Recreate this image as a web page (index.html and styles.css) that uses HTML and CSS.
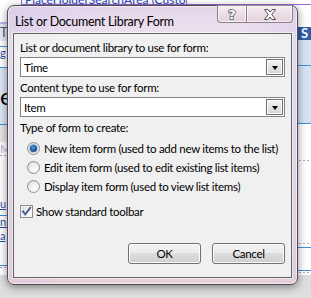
FILE: index.html
```html
<!DOCTYPE html>
<html>
<head>
<meta charset="utf-8">
<link rel="stylesheet" href="styles.css">
</head>
<body>
<div class="page">
  <div class="bg-top">
    <span class="ph">PlaceHolderSearchArea (Custom)</span>
    <span class="ph-line"></span>
  </div>
  <div class="bg-cols">
    <div class="lcol">
      <div class="gap h17"></div>
      <div class="lav-line"></div>
      <div class="band tr">Tr</div>
      <div class="gap h5"></div>
      <div class="bline"></div>
      <div class="band link h20">g</div>
      <div class="bline"></div>
      <div class="band big">e</div>
      <div class="bline"></div>
      <div class="band grey h17"></div>
      <div class="band faded">M</div>
      <div class="dots"></div>
      <div class="gap h42"></div>
      <div class="band link h13">u</div>
      <div class="gap h4"></div>
      <div class="bline"></div>
      <div class="band link h14">ns</div>
      <div class="band link h13">a</div>
      <div class="gap h22"></div>
      <div class="bline"></div>
      <div class="gap h1"></div>
      <div class="dots"></div>
    </div>
    <div class="rcol">
      <div class="gap h22"></div>
      <div class="band dark">S</div>
      <div class="band lblue h25"></div>
      <div class="bline"></div>
      <div class="band lblue h57"></div>
      <div class="bline"></div>
      <div class="gap h36"></div>
      <div class="dots"></div>
      <div class="gap h82"></div>
      <div class="gdots"></div>
      <div class="gap h3"></div>
      <div class="bline"></div>
      <div class="gap h22"></div>
      <div class="bline"></div>
      <div class="gap h1"></div>
      <div class="dots"></div>
    </div>
  </div>
  <div class="bg-bottom"></div>
</div>

<div class="dialog">
  <div class="titlebar">
    <span class="title">List or Document Library Form</span>
    <div class="caption-btns">
      <div class="cbtn help">
        <svg width="12" height="14" viewBox="0 0 12 14"><text x="6" y="12" text-anchor="middle" font-family="DejaVu Sans, sans-serif" font-weight="bold" font-size="13" fill="#ffffff" stroke="#5a5a5a" stroke-width="1.6" paint-order="stroke">?</text></svg>
      </div>
      <div class="cbtn close">
        <svg width="14" height="11" viewBox="0 0 14 11"><path d="M1.5 0.5 H5 L7 3 L9 0.5 H12.5 L8.8 5.5 L12.5 10.5 H9 L7 8 L5 10.5 H1.5 L5.2 5.5 Z" fill="#ffffff" stroke="#555555" stroke-width="1" stroke-linejoin="round"/></svg>
      </div>
    </div>
  </div>
  <div class="client">
    <div class="label">List or document library to use for form:</div>
    <div class="select"><span class="sel-text">Time</span><div class="ddbtn"><i class="tri"></i></div></div>
    <div class="label gap-top">Content type to use for form:</div>
    <div class="select"><span class="sel-text">Item</span><div class="ddbtn"><i class="tri"></i></div></div>
    <div class="label gap-top">Type of form to create:</div>
    <div class="radios">
      <div class="radio-row"><span class="radio checked"></span>New item form (used to add new items to the list)</div>
      <div class="radio-row"><span class="radio"></span>Edit item form (used to edit existing list items)</div>
      <div class="radio-row"><span class="radio"></span>Display item form (used to view list items)</div>
    </div>
    <div class="check-row">
      <span class="checkbox"><svg width="11" height="11" viewBox="0 0 11 11"><path d="M2 5.5 L4.3 8.3 L9.2 1.8" fill="none" stroke="#4b5f96" stroke-width="2" stroke-linecap="square"/></svg></span>
      Show standard toolbar
    </div>
    <div class="buttons">
      <div class="btn">OK</div>
      <div class="btn">Cancel</div>
    </div>
  </div>
</div>
</body>
</html>
```

FILE: styles.css
```css
html, body {
  margin: 0;
  padding: 0;
}
body {
  width: 311px;
  height: 298px;
  overflow: hidden;
  position: relative;
  background: #ffffff;
  font-family: Lato, "Noto Sans", sans-serif;
  font-size: 11.5px;
  color: #000;
}

/* ---------- background page ---------- */
.page {
  display: flex;
  flex-direction: column;
  height: 298px;
}
.bg-top {
  height: 5px;
  display: flex;
  align-items: flex-end;
  overflow: hidden;
}
.ph {
  margin-left: 21px;
  width: 166px;
  height: 12px;
  border: 1px solid #9c6ad6;
  color: #2b43c8;
  font-size: 12px;
  line-height: 11px;
  white-space: nowrap;
  overflow: hidden;
  padding-left: 3px;
  box-sizing: border-box;
  flex: none;
}
.ph-line {
  flex: 1;
  height: 1px;
  background: #9c6ad6;
}
.bg-cols {
  display: flex;
  height: 270px;
}
.lcol {
  width: 155px;
  display: flex;
  flex-direction: column;
}
.rcol {
  flex: 1;
  display: flex;
  flex-direction: column;
}
.gap { flex: none; }
.h1 { height: 1px; }
.h3 { height: 3px; }
.h4 { height: 4px; }
.h5 { height: 5px; }
.h13 { height: 13px; }
.h14 { height: 14px; }
.h17 { height: 17px; }
.h20 { height: 20px; }
.h22 { height: 22px; }
.h25 { height: 25px; }
.h36 { height: 36px; }
.h42 { height: 42px; }
.h57 { height: 57px; }
.h82 { height: 82px; }
.band {
  flex: none;
  overflow: hidden;
  white-space: nowrap;
}
.lav-line {
  height: 2px;
  background: #c6b9e6;
}
.bline {
  flex: none;
  height: 1px;
  background: #3b8fe3;
}
.tr {
  height: 17px;
  background: #e4ebf7;
  color: #4f5d7a;
  font-size: 13px;
  line-height: 17px;
}
.link {
  color: #1f4fa8;
  text-decoration: underline;
  font-size: 11px;
  line-height: 12px;
}
.big {
  height: 56px;
  background: #dbe6f6;
  font-size: 24px;
  line-height: 56px;
}
.grey {
  background: #e6e6e6;
}
.faded {
  height: 13px;
  color: #b9b0d4;
  line-height: 13px;
}
.dots {
  flex: none;
  height: 1px;
  background: repeating-linear-gradient(to right, #b49be0 0 2px, transparent 2px 4px);
}
.gdots {
  flex: none;
  height: 1px;
  background: repeating-linear-gradient(to right, #a8b3c4 0 2px, transparent 2px 4px);
}
.dark {
  height: 13px;
  background: #2e5ea8;
  color: #fff;
  font-weight: bold;
  font-size: 13px;
  line-height: 13px;
  padding-left: 146px;
}
.lblue {
  background: #d7e3f5;
}
.bg-bottom {
  flex: 1;
  background: #dedede;
}

/* ---------- dialog ---------- */
.dialog {
  position: absolute;
  left: 7px;
  top: 5px;
  width: 291px;
  height: 280px;
  box-sizing: border-box;
  border: 1px solid #4e4e4e;
  border-radius: 7px;
  background:
    linear-gradient(to right, rgba(200, 190, 235, 0.35), rgba(255, 240, 245, 0) 30%, rgba(255, 240, 245, 0) 80%, rgba(200, 190, 235, 0.3)),
    linear-gradient(to bottom, #e3d6ec 0%, #efe3ee 12%, #ecdce6 50%, #ead3d6 100%);
  box-shadow: 0 2px 8px rgba(0, 0, 0, 0.45), inset 0 0 0 1px rgba(255, 255, 255, 0.55);
  display: flex;
  flex-direction: column;
}
.titlebar {
  height: 27px;
  display: flex;
  align-items: flex-start;
  padding-left: 7px;
  padding-right: 4px;
  flex: none;
}
.title {
  margin-top: 8px;
  line-height: 15px;
  font-size: 12.5px;
  letter-spacing: -0.3px;
  color: #000;
}
.caption-btns {
  margin-left: auto;
  margin-top: -1px;
  display: flex;
}
.cbtn {
  height: 18px;
  box-sizing: border-box;
  border: 1px solid #8c8088;
  border-top-color: #9a8f96;
  background: linear-gradient(to bottom, #f6eef3, #ecdde6 50%, #e4d2dc);
  display: flex;
  align-items: center;
  justify-content: center;
  box-shadow: inset 0 0 0 1px rgba(255, 255, 255, 0.6);
}
.help {
  width: 29px;
  border-radius: 0 0 0 4px;
  border-right: none;
}
.close {
  width: 47px;
  border-radius: 0 0 4px 0;
}
.client {
  flex: 1;
  margin: 0 5px 6px 5px;
  border: 1px solid #646464;
  background: #f0f0f0;
  padding: 6px 6px 0 6px;
  display: flex;
  flex-direction: column;
  box-shadow: 0 0 0 1px rgba(255, 255, 255, 0.5);
  letter-spacing: -0.3px;
}
.label {
  line-height: 15px;
  height: 15px;
  white-space: nowrap;
}
.gap-top {
  margin-top: 3px;
}
.select {
  margin-top: 2px;
  height: 20px;
  box-sizing: border-box;
  border: 1px solid #828282;
  background: #fff;
  display: flex;
  align-items: center;
}
.sel-text {
  padding-left: 3px;
  line-height: 15px;
}
.ddbtn {
  margin-left: auto;
  margin-right: 1px;
  width: 17px;
  height: 16px;
  box-sizing: border-box;
  border: 1px solid #707070;
  background: linear-gradient(to bottom, #f2f2f2, #e4e4e4 50%, #d6d6d6);
  box-shadow: inset 0 0 0 1px #fbfbfb;
  display: flex;
  align-items: center;
  justify-content: center;
}
.tri {
  width: 0;
  height: 0;
  border-left: 3.5px solid transparent;
  border-right: 3.5px solid transparent;
  border-top: 4px solid #000;
  margin-top: 2px;
}
.radios {
  margin-top: 4px;
  display: flex;
  flex-direction: column;
}
.radio-row {
  height: 19px;
  display: flex;
  align-items: center;
  padding-left: 7px;
  white-space: nowrap;
}
.radio {
  width: 13px;
  height: 13px;
  box-sizing: border-box;
  border-radius: 50%;
  border: 1px solid #8d8e8f;
  background: radial-gradient(circle at 65% 70%, #ffffff 0%, #f1f1f1 40%, #d4d4d4 100%);
  margin-right: 4px;
  flex: none;
  display: flex;
  align-items: center;
  justify-content: center;
}
.radio.checked::after {
  content: "";
  width: 7px;
  height: 7px;
  border-radius: 50%;
  background: radial-gradient(circle at 45% 40%, #6aa6e0 0%, #2a6bb0 35%, #173f6e 75%);
  box-shadow: 0 0 0 1px rgba(120, 170, 220, 0.6);
}
.check-row {
  margin-top: 9px;
  height: 13px;
  display: flex;
  align-items: center;
  white-space: nowrap;
  line-height: 15px;
}
.checkbox {
  width: 13px;
  height: 13px;
  box-sizing: border-box;
  border: 1px solid #8e8f8f;
  background: linear-gradient(135deg, #d9d9d9, #f4f4f4 60%, #ffffff);
  box-shadow: inset 0 0 0 1px #f4f4f4;
  margin-right: 3px;
  flex: none;
  display: flex;
  align-items: center;
  justify-content: center;
}
.buttons {
  margin-top: 25px;
  display: flex;
  justify-content: flex-end;
  gap: 11px;
}
.btn {
  width: 73px;
  height: 21px;
  box-sizing: border-box;
  border: 1px solid #707070;
  border-radius: 3px;
  background: linear-gradient(to bottom, #f2f2f2 0%, #ebebeb 50%, #dddddd 50%, #cfcfcf 100%);
  box-shadow: inset 0 0 0 1px #fcfcfc;
  display: flex;
  align-items: center;
  justify-content: center;
  line-height: 15px;
}
```
